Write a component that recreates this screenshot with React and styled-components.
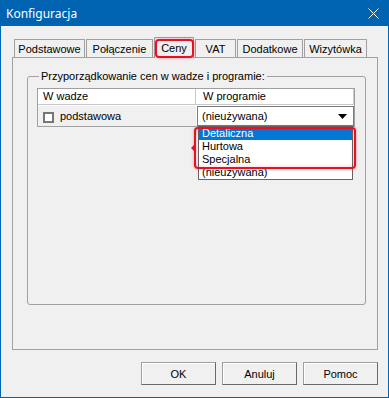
import styled, { createGlobalStyle } from "styled-components";

const GlobalStyle = createGlobalStyle`
  html, body {
    margin: 0;
    padding: 0;
    background: #f0f0f0;
  }
  body {
    font-family: "Liberation Sans", Arial, sans-serif;
    font-size: 11px;
    color: #000;
  }
`;

const Window = styled.div`
  width: 389px;
  height: 398px;
  box-sizing: border-box;
  border: 1px solid #0063b1;
  border-top: none;
  background: #f0f0f0;
  display: flex;
  flex-direction: column;
`;

const TitleBar = styled.div`
  height: 26px;
  margin: 0 -1px;
  padding: 0 10px 0 6px;
  background: #0063b1;
  color: #fff;
  display: flex;
  align-items: center;
  justify-content: space-between;
  font-family: "Noto Sans", "Open Sans", sans-serif;
  font-size: 12px;
`;

const Body = styled.div`
  flex: 1;
  display: flex;
  flex-direction: column;
  padding: 11px 10px 0 11px;
`;

const TabStrip = styled.div`
  display: flex;
  align-items: flex-end;
  gap: 1px;
  height: 20px;
  padding-left: 2px;
`;

const Tab = styled.div`
  position: relative;
  z-index: ${(p) => (p.$active ? 2 : 1)};
  box-sizing: border-box;
  width: ${(p) => p.$w}px;
  height: ${(p) => (p.$active ? 21 : 18)}px;
  margin-bottom: ${(p) => (p.$active ? -1 : 0)}px;
  border: 1px solid #a0a0a0;
  border-bottom: none;
  background: #f0f0f0;
  display: flex;
  align-items: center;
  justify-content: center;
  padding-top: ${(p) => (p.$active ? 0 : 1)}px;

  ${(p) =>
    p.$marked &&
    `
    &::after {
      content: "";
      position: absolute;
      top: 1px;
      left: 0;
      right: -1px;
      bottom: 0;
      border: 2px solid #e81123;
      border-radius: 4px;
      box-shadow: 0 0 3px rgba(232, 17, 35, 0.45);
    }
  `}
`;

const Panel = styled.div`
  height: 293px;
  box-sizing: border-box;
  border: 1px solid #a0a0a0;
  display: flex;
  flex-direction: column;
  padding: 12px 11px 44px 14px;
`;

const GroupBox = styled.fieldset`
  flex: 1;
  min-width: 0;
  margin: 0;
  border: 1px solid #a0a0a0;
  border-radius: 3px;
  padding: 5px 10px 8px 9px;
  display: flex;
  flex-direction: column;
`;

const Legend = styled.legend`
  margin-left: 2px;
  padding: 0 2px;
  line-height: 13px;
  font-size: 11px;
`;

const List = styled.div`
  flex: 1;
  position: relative;
  background: #fff;
  border: 1px solid #a0a0a0;
`;

const HeaderRow = styled.div`
  display: flex;
  height: 16px;
`;

const HeaderCell = styled.div`
  box-sizing: border-box;
  width: 158px;
  border-right: 1px solid #c8c8c8;
  border-bottom: 1px solid #c8c8c8;
  padding-left: ${(p) => p.$pad}px;
  line-height: 15px;
`;

const Row = styled.div`
  display: flex;
  height: 20px;
  margin-top: 1px;
`;

const NameCell = styled.div`
  width: 158px;
  background: #f0f0f0;
  display: flex;
  align-items: center;
  gap: 6px;
  padding-left: 5px;
  box-sizing: border-box;
`;

const CheckBox = styled.span`
  width: 11px;
  height: 11px;
  box-sizing: border-box;
  border: 2px solid #777;
  background: #fff;
  margin-top: 2px;
`;

const Combo = styled.div`
  position: relative;
  box-sizing: border-box;
  width: 157px;
  margin-left: 1px;
  border: 1px solid #7a7a7a;
  background: #fff;
  display: flex;
  align-items: center;
  justify-content: space-between;
  padding: 0 6px 0 4px;
`;

const DropList = styled.div`
  position: absolute;
  top: calc(100% + 1px);
  left: 0;
  right: 0;
  border: 1px solid #646464;
  background: #fff;
  z-index: 3;
`;

const Option = styled.div`
  height: 13px;
  line-height: 13px;
  padding-left: 3px;
  background: ${(p) => (p.$selected ? "#0078d7" : "#fff")};
  color: ${(p) => (p.$selected ? "#fff" : "#000")};
`;

const Callout = styled.div`
  position: absolute;
  top: 20px;
  left: -4px;
  right: -3px;
  height: 42px;
  box-sizing: border-box;
  border: 2px solid #e81123;
  border-radius: 4px;
  box-shadow: 0 0 3px rgba(232, 17, 35, 0.45), inset 0 0 4px rgba(232, 17, 35, 0.25);
  z-index: 4;
  pointer-events: none;

  &::before {
    content: "";
    position: absolute;
    left: -5px;
    top: 16px;
    border-style: solid;
    border-width: 3px 3px 3px 0;
    border-color: transparent #e81123 transparent transparent;
  }
`;

const ButtonRow = styled.div`
  display: flex;
  justify-content: flex-end;
  gap: 6px;
  margin-top: 12px;
`;

const Button = styled.button`
  width: 75px;
  height: 23px;
  box-sizing: border-box;
  border: 1px solid;
  border-color: #a0a0a0 #696969 #696969 #a0a0a0;
  box-shadow: inset 1px 1px #fff;
  background: #f0f0f0;
  font-family: "Liberation Sans", Arial, sans-serif;
  font-size: 11px;
  color: #000;
  padding: 0;
`;

const tabs = [
  { label: "Podstawowe", w: 71 },
  { label: "Połączenie", w: 67 },
  { label: "Ceny", w: 40, active: true },
  { label: "VAT", w: 41 },
  { label: "Dodatkowe", w: 66 },
  { label: "Wizytówka", w: 63 },
];

const options = ["Detaliczna", "Hurtowa", "Specjalna", "(nieużywana)"];

export default function App() {
  return (
    <>
      <GlobalStyle />
      <Window>
        <TitleBar>
          <span>Konfiguracja</span>
          <svg width="11" height="11" viewBox="0 0 11 11">
            <path d="M0.5 0.5 L10.5 10.5 M10.5 0.5 L0.5 10.5" stroke="#fff" strokeWidth="1" />
          </svg>
        </TitleBar>
        <Body>
          <TabStrip>
            {tabs.map((t) => (
              <Tab key={t.label} $w={t.w} $active={t.active} $marked={t.active}>
                {t.label}
              </Tab>
            ))}
          </TabStrip>
          <Panel>
            <GroupBox>
              <Legend>Przyporządkowanie cen w wadze i programie:</Legend>
              <List>
                <HeaderRow>
                  <HeaderCell $pad={5}>W wadze</HeaderCell>
                  <HeaderCell $pad={7}>W programie</HeaderCell>
                </HeaderRow>
                <Row>
                  <NameCell>
                    <CheckBox />
                    <span>podstawowa</span>
                  </NameCell>
                  <Combo>
                    <span>(nieużywana)</span>
                    <svg width="9" height="5" viewBox="0 0 9 5">
                      <path d="M0 0 H9 L4.5 5 Z" fill="#000" />
                    </svg>
                    <DropList>
                      {options.map((o, i) => (
                        <Option key={o} $selected={i === 0}>
                          {o}
                        </Option>
                      ))}
                    </DropList>
                    <Callout />
                  </Combo>
                </Row>
              </List>
            </GroupBox>
          </Panel>
          <ButtonRow>
            <Button>OK</Button>
            <Button>Anuluj</Button>
            <Button>Pomoc</Button>
          </ButtonRow>
        </Body>
      </Window>
    </>
  );
}
